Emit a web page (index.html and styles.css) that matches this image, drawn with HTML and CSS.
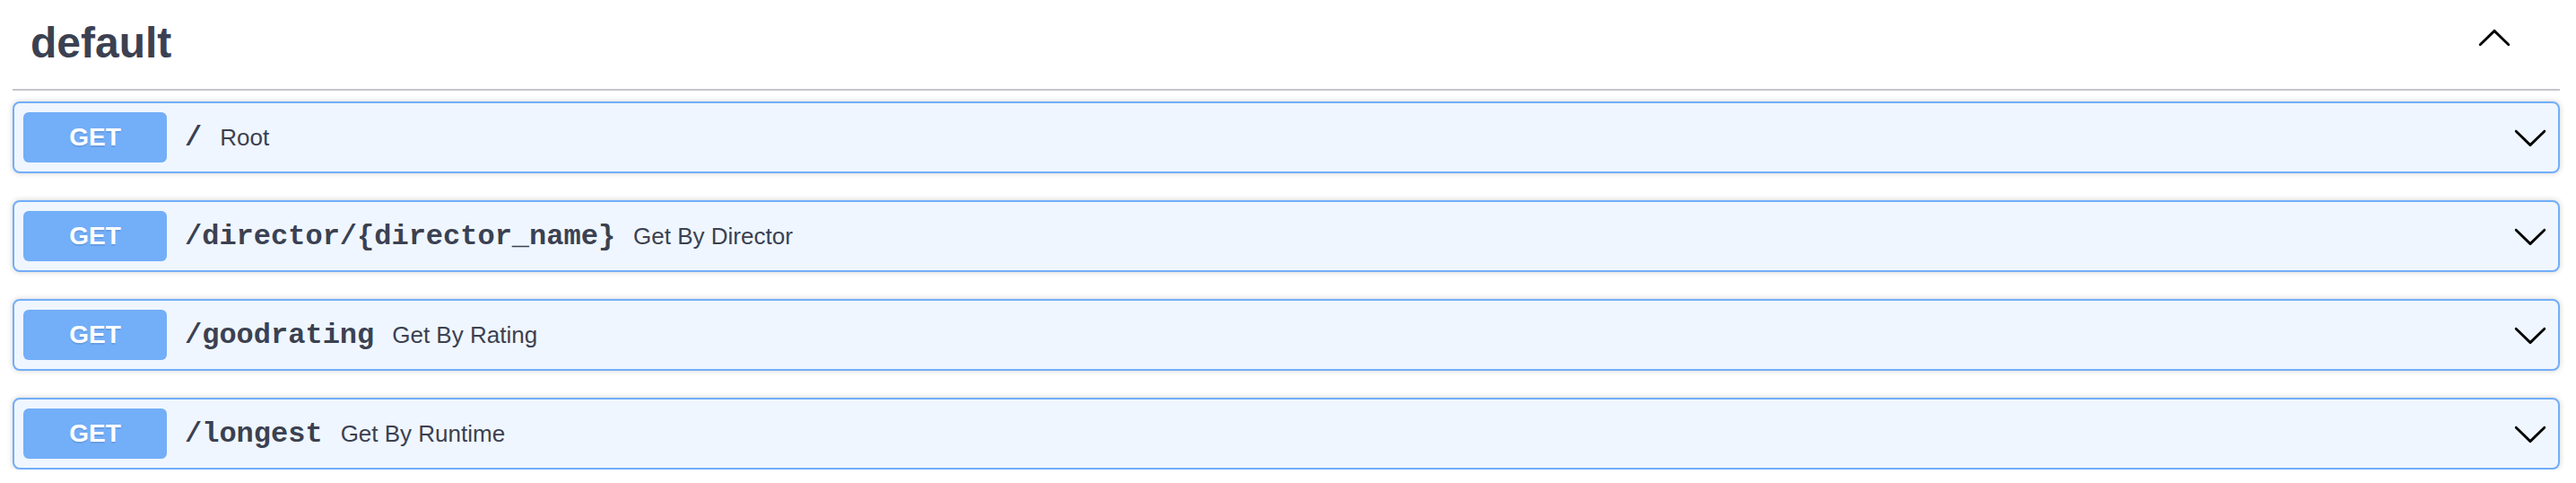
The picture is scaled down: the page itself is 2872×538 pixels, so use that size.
FILE: index.html
```html
<!DOCTYPE html>
<html lang="en">
<head>
<meta charset="utf-8">
<title>default</title>
<link rel="stylesheet" href="styles.css">
</head>
<body>
<div class="section">
  <div class="tag">
    <h3 class="tag-name">default</h3>
    <span class="tag-toggle">
      <svg class="arrow up" width="40" height="40" viewBox="0 0 20 20"><path d="M17.418 6.109c.272-.268.709-.268.979 0s.271.701 0 .969l-7.908 7.83c-.27.268-.707.268-.979 0l-7.908-7.83c-.27-.268-.27-.701 0-.969.271-.268.709-.268.979 0L10 13.25l7.418-7.141z"/></svg>
    </span>
  </div>
  <div class="ops">
    <div class="op">
      <span class="method">GET</span>
      <span class="path">/</span>
      <span class="desc">Root</span>
      <svg class="arrow" width="40" height="40" viewBox="0 0 20 20"><path d="M17.418 6.109c.272-.268.709-.268.979 0s.271.701 0 .969l-7.908 7.83c-.27.268-.707.268-.979 0l-7.908-7.83c-.27-.268-.27-.701 0-.969.271-.268.709-.268.979 0L10 13.25l7.418-7.141z"/></svg>
    </div>
    <div class="op">
      <span class="method">GET</span>
      <span class="path">/director/{director_name}</span>
      <span class="desc">Get By Director</span>
      <svg class="arrow" width="40" height="40" viewBox="0 0 20 20"><path d="M17.418 6.109c.272-.268.709-.268.979 0s.271.701 0 .969l-7.908 7.83c-.27.268-.707.268-.979 0l-7.908-7.83c-.27-.268-.27-.701 0-.969.271-.268.709-.268.979 0L10 13.25l7.418-7.141z"/></svg>
    </div>
    <div class="op">
      <span class="method">GET</span>
      <span class="path">/goodrating</span>
      <span class="desc">Get By Rating</span>
      <svg class="arrow" width="40" height="40" viewBox="0 0 20 20"><path d="M17.418 6.109c.272-.268.709-.268.979 0s.271.701 0 .969l-7.908 7.83c-.27.268-.707.268-.979 0l-7.908-7.83c-.27-.268-.27-.701 0-.969.271-.268.709-.268.979 0L10 13.25l7.418-7.141z"/></svg>
    </div>
    <div class="op">
      <span class="method">GET</span>
      <span class="path">/longest</span>
      <span class="desc">Get By Runtime</span>
      <svg class="arrow" width="40" height="40" viewBox="0 0 20 20"><path d="M17.418 6.109c.272-.268.709-.268.979 0s.271.701 0 .969l-7.908 7.83c-.27.268-.707.268-.979 0l-7.908-7.83c-.27-.268-.27-.701 0-.969.271-.268.709-.268.979 0L10 13.25l7.418-7.141z"/></svg>
    </div>
  </div>
</div>
</body>
</html>
```
FILE: styles.css
```css
html, body {
  margin: 0;
  padding: 0;
  background: #ffffff;
}

body {
  font-family: "Liberation Sans", Arial, sans-serif;
  color: #3b4151;
}

.section {
  padding: 0 18px 0 14px;
}

.tag {
  box-sizing: border-box;
  height: 101px;
  display: flex;
  align-items: flex-start;
  padding: 20px 53px 0 20px;
  border-bottom: 2px solid #c4c6cb;
  margin-bottom: 12px;
}

.tag-name {
  flex: 1;
  margin: 0;
  font-size: 48px;
  line-height: 55px;
  font-weight: 700;
  color: #3b4151;
}

.tag-toggle {
  display: flex;
  margin-top: 3px;
}

.arrow {
  display: block;
  fill: #000000;
  flex: none;
}

.arrow.up {
  transform: rotate(180deg);
}

.ops {
  display: flex;
  flex-direction: column;
  gap: 30px;
}

.op {
  box-sizing: border-box;
  height: 80px;
  display: flex;
  align-items: center;
  padding: 10px 11px 10px 10px;
  background: #eff6ff;
  border: 2px solid #72aef8;
  border-radius: 8px;
  box-shadow: 0 0 6px rgba(0, 0, 0, 0.19);
}

.method {
  box-sizing: border-box;
  width: 160px;
  height: 56px;
  display: flex;
  align-items: center;
  justify-content: center;
  background: #73aef8;
  border-radius: 6px;
  color: #ffffff;
  font-size: 28px;
  font-weight: 700;
  text-shadow: 0 2px 0 rgba(0, 0, 0, 0.1);
}

.path {
  padding: 0 20px;
  font-family: "Liberation Mono", "Courier New", monospace;
  font-size: 32px;
  font-weight: 700;
  color: #3b4151;
}

.desc {
  flex: 1;
  font-size: 26px;
  color: #3b4151;
}
```
